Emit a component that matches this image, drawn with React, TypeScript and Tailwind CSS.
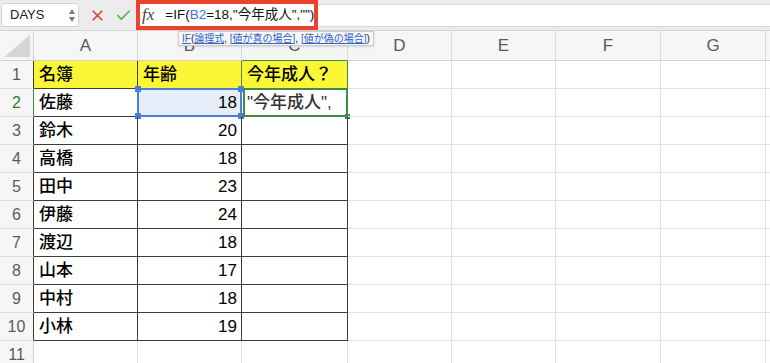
import React from 'react';
import { X, Check, ChevronDown } from 'lucide-react';
import clsx from 'clsx';

// row data for A2:B10
const people: [string, number][] = [
  ['佐藤', 18],
  ['鈴木', 20],
  ['高橋', 18],
  ['田中', 23],
  ['伊藤', 24],
  ['渡辺', 18],
  ['山本', 17],
  ['中村', 18],
  ['小林', 19],
];

const letters = ['A', 'B', 'C', 'D', 'E', 'F', 'G', ''];

function Toolbar() {
  return (
    <div className="h-[31px] flex items-center bg-[#ececec] border-b border-[#d4d4d4]">
      {/* name box */}
      <div className="ml-[1px] w-[78px] h-[24px] bg-white border border-[#d2d2d2] rounded-[3px] flex items-center justify-between pl-[8px] pr-[3px] text-[13px] text-[#222]">
        <span>DAYS</span>
        <div className="flex flex-col items-center gap-[3px]">
          <div className="w-0 h-0 border-x-[3.5px] border-x-transparent border-b-[5px] border-b-[#7a7a7a]" />
          <div className="w-0 h-0 border-x-[3.5px] border-x-transparent border-t-[5px] border-t-[#7a7a7a]" />
        </div>
      </div>
      <div className="w-[57px] flex items-center justify-center gap-[9px] pl-[5px]">
        <X size={17} strokeWidth={2.4} className="text-[#d9463b]" />
        <Check size={17} strokeWidth={2.4} className="text-[#5aae4e]" />
      </div>
      {/* formula input, highlighted */}
      <div className="w-[182px] h-[30px] border-[4px] border-[#e9432d] bg-white flex items-center">
        <span className="ml-[2px] text-[17px] italic text-[#444] [font-family:'Liberation_Serif',serif]">fx</span>
        <ChevronDown size={10} strokeWidth={1.5} className="ml-[3px] text-[#aaa]" />
        <div className="ml-[4px] w-px h-[18px] bg-[#ddd]" />
        <span className="ml-[4px] text-[13.5px] text-[#111] whitespace-nowrap">
          =IF(<span className="text-[#3a6fd6]">B2</span>=18,"今年成人","")
        </span>
      </div>
      <div className="flex-1 h-[23px] bg-white border-y border-[#d8d8d8]" />
    </div>
  );
}

function Tooltip() {
  const link = 'text-[#2e62c9] underline underline-offset-1';
  return (
    <div className="absolute left-[178px] top-[31px] h-[15px] px-[3px] flex items-center bg-[#f7f7f7] border border-[#cacaca] shadow-sm text-[10px] text-[#222] whitespace-pre leading-none">
      <span className={link}>IF</span>
      <span>(</span>
      <span className={link}>論理式</span>
      <span>, </span>
      <span className={link}>[値が真の場合]</span>
      <span>, </span>
      <span className={link}>[値が偽の場合]</span>
      <span>)</span>
    </div>
  );
}

function Cell({ r, c }: { r: number; c: number }) {
  const inData = r <= 10 && c <= 2;
  const greenRight = r === 1 && (c === 1 || c === 2);
  let text: React.ReactNode = null;
  let align = 'justify-start pl-[5px] font-medium';
  if (r === 1 && c === 0) text = '名簿';
  if (r === 1 && c === 1) text = '年齢';
  if (r === 1 && c === 2) text = '今年成人？';
  if (r >= 2 && r <= 10 && c === 0) text = people[r - 2][0];
  if (r >= 2 && r <= 10 && c === 1) {
    text = people[r - 2][1];
    align = 'justify-end pr-[4px]';
  }
  if (r === 2 && c === 2) text = <span className="text-[#333]">"今年成人",</span>;

  return (
    <div
      className={clsx(
        'relative h-[28px] flex items-center border-b border-r text-[17px] text-black overflow-visible',
        align,
        inData ? 'border-b-[#3c3c3c]' : 'border-b-[#e2e2e2]',
        greenRight ? 'border-r-[#3f8a44]' : inData ? 'border-r-[#3c3c3c]' : 'border-r-[#e2e2e2]',
        r === 1 && c <= 2 && 'bg-[#fbf737]',
        r === 2 && c === 1 && 'bg-[#e8eef9]'
      )}
    >
      <span className="whitespace-nowrap overflow-hidden">{text}</span>
      {r === 2 && c === 1 && (
        <div className="absolute -left-[1px] -top-[1px] -right-[1px] -bottom-[1px] border-2 border-[#4a7ed8] pointer-events-none">
          <div className="absolute -left-[4px] -top-[4px] w-[6px] h-[6px] bg-[#4a7ed8]" />
          <div className="absolute -right-[4px] -top-[4px] w-[6px] h-[6px] bg-[#4a7ed8]" />
          <div className="absolute -left-[4px] -bottom-[4px] w-[6px] h-[6px] bg-[#4a7ed8]" />
          <div className="absolute -right-[4px] -bottom-[4px] w-[6px] h-[6px] bg-[#4a7ed8]" />
        </div>
      )}
      {r === 2 && c === 2 && (
        <div className="absolute left-[1px] -top-[1px] -right-[1px] -bottom-[1px] border-2 border-[#3f8a44] pointer-events-none">
          <div className="absolute -right-[4px] -bottom-[4px] w-[5px] h-[5px] bg-[#3f8a44]" />
        </div>
      )}
    </div>
  );
}

function Sheet() {
  const rows = Array.from({ length: 11 }, (_, i) => i + 1);
  return (
    <div className="grid grid-cols-[34px_104px_104px_106px_104px_104px_105px_105px_1fr]">
      {/* header row */}
      <div className="h-[30px] bg-[#f6f6f6] border-r border-b border-[#d2d2d2] relative">
        <svg className="absolute right-[3px] bottom-[3px]" width="26" height="22" viewBox="0 0 26 22">
          <polygon points="26,0 26,22 0,22" fill="#d6d6d6" />
        </svg>
      </div>
      {letters.map((l, i) => (
        <div
          key={'h' + i}
          className={clsx(
            'h-[30px] bg-[#f6f6f6] border-r border-b border-r-[#dadada] flex items-center justify-center text-[17px] text-[#5a5a5a]',
            i === 2 ? 'border-b-[#3f8a44] text-[#2f7d32]' : 'border-b-[#cfcfcf]'
          )}
        >
          {l}
        </div>
      ))}
      {rows.map((r) => (
        <React.Fragment key={r}>
          <div
            className={clsx(
              'h-[28px] bg-[#f6f6f6] border-b border-r border-b-[#dcdcdc] flex items-center justify-center text-[16px]',
              r === 2 ? 'text-[#2f7d32] border-r-[#3f8a44]' : 'text-[#5a5a5a]',
              r !== 2 && (r <= 10 ? 'border-r-[#3c3c3c]' : 'border-r-[#d2d2d2]')
            )}
          >
            {r}
          </div>
          {letters.map((_, c) => (
            <Cell key={c} r={r} c={c} />
          ))}
        </React.Fragment>
      ))}
    </div>
  );
}

export default function App() {
  return (
    <div className="relative w-[770px] h-[363px] overflow-hidden bg-white [font-family:'Liberation_Sans','Noto_Sans_CJK_JP',sans-serif]">
      <Toolbar />
      <Sheet />
      <Tooltip />
    </div>
  );
}
